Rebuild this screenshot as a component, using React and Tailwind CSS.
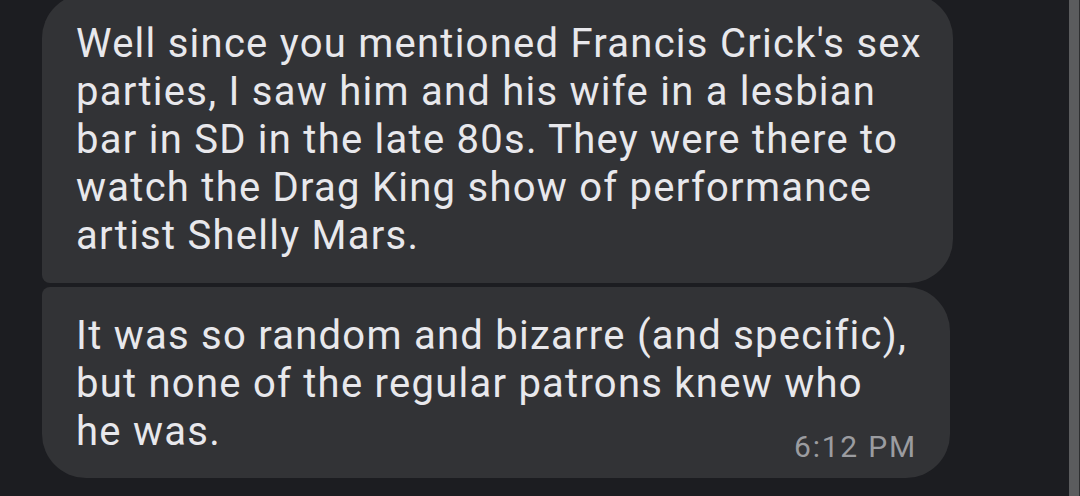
import React from "react";

const firstLines = [
  "Well since you mentioned Francis Crick's sex",
  "parties, I saw him and his wife in a lesbian",
  "bar in SD in the late 80s. They were there to",
  "watch the Drag King show of performance",
  "artist Shelly Mars.",
];

const secondLines = [
  "It was so random and bizarre (and specific),",
  "but none of the regular patrons knew who",
  "he was.",
];

export default function App() {
  return (
    <div
      className="flex h-[496px] w-[1080px] overflow-hidden bg-[#1c1d21]"
      style={{ fontFamily: "Roboto, 'Noto Sans', sans-serif" }}
    >
      {/* Fil de messages */}
      <div className="flex flex-1 flex-col gap-[4px] pl-[42px] -mt-[6px]">
        <div className="w-[911px] rounded-[44px] rounded-bl-[8px] bg-[#323336] pl-[34px] pt-[26px] pb-[23px] text-[40px] leading-[48px] tracking-[1.25px] text-[#e8e8ec] whitespace-nowrap">
          {firstLines.map((line) => (
            <div key={line}>{line}</div>
          ))}
        </div>

        <div className="w-[908px] rounded-[44px] rounded-tl-[8px] bg-[#323336] pl-[34px] pr-[33px] pt-[25px] pb-[13px] whitespace-nowrap">
          <div className="text-[40px] leading-[48px] tracking-[1.25px] text-[#e8e8ec]">
            {secondLines.map((line) => (
              <div key={line}>{line}</div>
            ))}
          </div>
          <div className="-mt-[27px] flex justify-end text-[30px] leading-[36px] tracking-[1.8px] text-[#9b9ca0]">
            6:12 PM
          </div>
        </div>
      </div>

      {/* Barre de défilement */}
      <div className="w-[10px] bg-[#5b5c5e]"></div>
      <div className="w-[1px] bg-[#2e2f31]"></div>
    </div>
  );
}
